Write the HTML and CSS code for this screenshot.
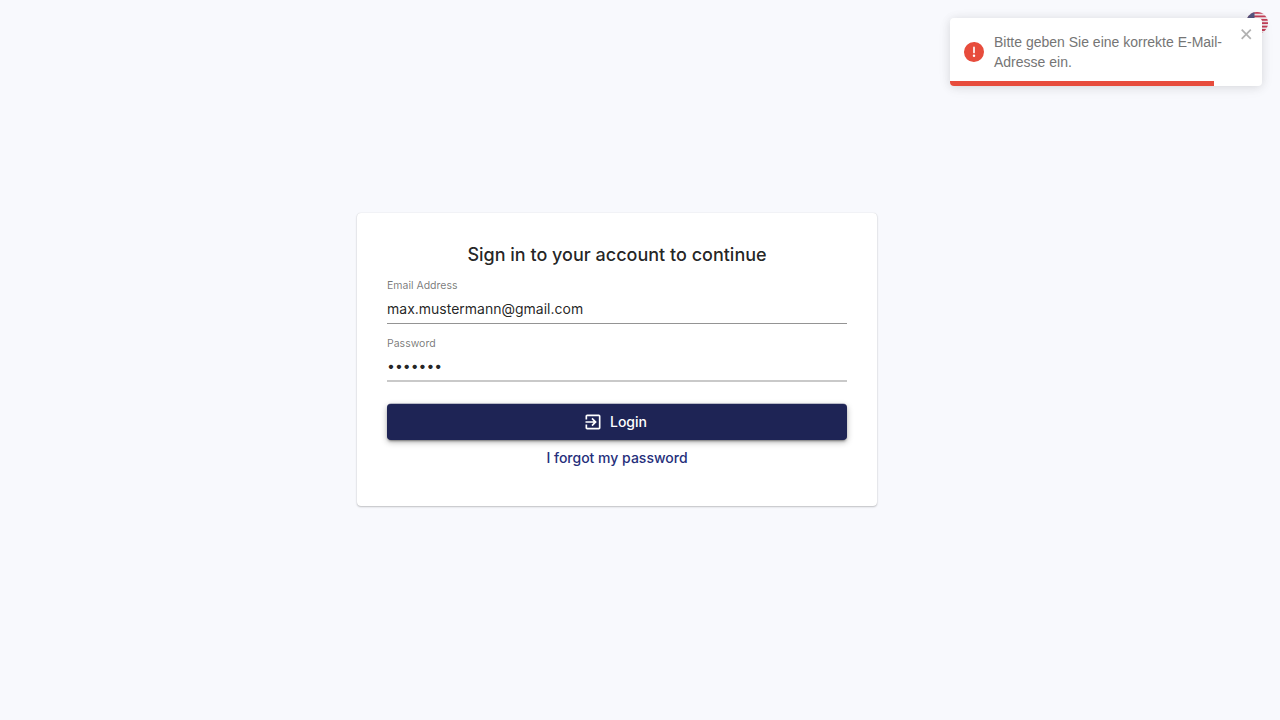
FILE: index.html
```html
<!DOCTYPE html>
<html lang="en">
<head>
<meta charset="utf-8">
<title>Sign in</title>
<link rel="stylesheet" href="styles.css">
</head>
<body>
<header class="topbar">
  <button class="language" aria-label="Language">
    <svg width="22" height="22" viewBox="0 0 22 22">
      <clipPath id="disc"><circle cx="11" cy="11" r="11"/></clipPath>
      <g clip-path="url(#disc)">
        <path fill="#f0e4e8" d="M0 0h22v22H0z"/>
        <path stroke="#c02c48" stroke-width="1.8" d="M0 .9h22M0 4.4h22M0 7.8h22M0 11.2h22M0 14.6h22M0 18h22M0 21.4h22"/>
        <path fill="#464675" d="M0 0h8.5v11.8H0z"/>
      </g>
    </svg>
  </button>
</header>
<main class="page">
  <form class="card">
    <h1 class="title">Sign in to your account to continue</h1>
    <div class="field">
      <label class="label" for="email">Email Address</label>
      <input class="input" id="email" type="text" value="max.mustermann@gmail.com">
    </div>
    <div class="field field-password">
      <label class="label" for="password">Password</label>
      <input class="input input-password" id="password" type="password" value="example">
    </div>
    <button class="login" type="button">
      <svg width="20" height="20" viewBox="0 0 24 24" fill="currentColor"><path d="M10.09 15.59 11.5 17l5-5-5-5-1.41 1.41L12.67 11H3v2h9.67l-2.58 2.59zM19 3H5c-1.11 0-2 .9-2 2v4h2V5h14v14H5v-4H3v4c0 1.1.89 2 2 2h14c1.1 0 2-.9 2-2V5c0-1.1-.9-2-2-2z"/></svg>
      <span>Login</span>
    </button>
    <a class="forgot" href="#">I forgot my password</a>
  </form>
</main>
<aside class="toast" role="alert">
  <div class="toast-body">
    <svg class="toast-icon" width="20" height="20" viewBox="0 0 24 24" fill="#e74c3c"><path d="M11.983 0a12.206 12.206 0 00-8.51 3.653A11.8 11.8 0 000 12.207 11.779 11.779 0 0011.8 24h.214A12.111 12.111 0 0024 11.791 11.766 11.766 0 0011.983 0zM10.5 16.542a1.476 1.476 0 011.449-1.53h.027a1.527 1.527 0 011.523 1.47 1.475 1.475 0 01-1.449 1.53h-.027a1.529 1.529 0 01-1.523-1.47zM11 12.5v-6a1 1 0 012 0v6a1 1 0 11-2 0z"/></svg>
    <p class="toast-text">Bitte geben Sie eine korrekte E-Mail-Adresse ein.</p>
    <button class="toast-close" aria-label="close">
      <svg width="14" height="16" viewBox="0 0 14 16"><path fill="none" stroke="currentColor" stroke-width="1.7" d="m1.7 3.7 9.1 9.1m0-9.1-9.1 9.1"/></svg>
    </button>
  </div>
  <div class="toast-progress"></div>
</aside>
</body>
</html>
```
FILE: styles.css
```css
* { box-sizing: border-box; }
body {
  margin: 0;
  height: 100vh;
  overflow: hidden;
  background: #f8f9fd;
  font-family: Inter, "Liberation Sans", sans-serif;
  color: rgba(0, 0, 0, 0.87);
}
button { border: 0; padding: 0; background: none; font: inherit; }
svg { display: block; flex: none; }
.topbar {
  display: flex;
  justify-content: flex-end;
  height: 46px;
  padding: 12px;
}
.language { height: 22px; opacity: 0.9; }
.page {
  display: flex;
  justify-content: center;
  padding: 167px 46px 0 0;
}
.card {
  display: flex;
  flex-direction: column;
  width: 520px;
  height: 293px;
  padding: 30.5px 30px 30px;
  border-radius: 4px;
  background: #fff;
  box-shadow: 0 0 1px rgba(0, 0, 0, 0.16), 0 1px 2px rgba(0, 0, 0, 0.22);
}
.title {
  margin: 0 0 13px;
  font-size: 18px;
  line-height: 22px;
  font-weight: 500;
  text-align: center;
}
.field {
  display: flex;
  flex-direction: column;
  height: 45.5px;
  margin-bottom: 12.5px;
  border-bottom: 1px solid #949494;
}
.field-password {
  height: 45px;
  margin-bottom: 22px;
  border-bottom: 2px solid #c9c9c9;
}
.label {
  font-size: 10.5px;
  line-height: 14px;
  color: rgba(0, 0, 0, 0.54);
}
.input {
  width: 100%;
  height: 29px;
  padding: 3px 0 0;
  border: 0;
  outline: 0;
  background: none;
  font: 14px Inter, sans-serif;
  color: inherit;
}
.input-password { height: 27px; }
.login {
  display: flex;
  align-items: center;
  justify-content: center;
  gap: 7px;
  height: 36px;
  padding-right: 4px;
  border-radius: 4px;
  background: #1e2455;
  color: #fff;
  font-size: 14px;
  font-weight: 500;
  box-shadow: 0 -0.5px 0 #1e245580, 0 3px 1px -2px rgba(0, 0, 0, 0.2), 0 2px 2px rgba(0, 0, 0, 0.14), 0 2px 6px rgba(0, 0, 0, 0.3);
}
.forgot {
  margin-top: 6px;
  font-size: 14px;
  line-height: 24px;
  font-weight: 500;
  text-align: center;
  text-decoration: none;
  color: #262f7b;
}
.toast {
  position: absolute;
  top: 18px;
  right: 18px;
  display: flex;
  flex-direction: column;
  width: 312px;
  height: 68px;
  overflow: hidden;
  border-radius: 4px;
  background: #fff;
  box-shadow: 0 1px 10px rgba(0, 0, 0, 0.1), 0 2px 15px rgba(0, 0, 0, 0.05);
  font-family: "Liberation Sans", sans-serif;
}
.toast-body {
  display: flex;
  height: 63px;
  padding: 8px 8px 0 14px;
}
.toast-icon { margin: 16px 10px 0 0; }
.toast-text {
  flex: 1;
  margin: 6px 0 0;
  font-size: 14px;
  line-height: 20px;
  color: #757575;
}
.toast-close { align-self: flex-start; color: #000; opacity: 0.3; }
.toast-progress { width: 264px; height: 5px; background: #e74c3c; }
```
